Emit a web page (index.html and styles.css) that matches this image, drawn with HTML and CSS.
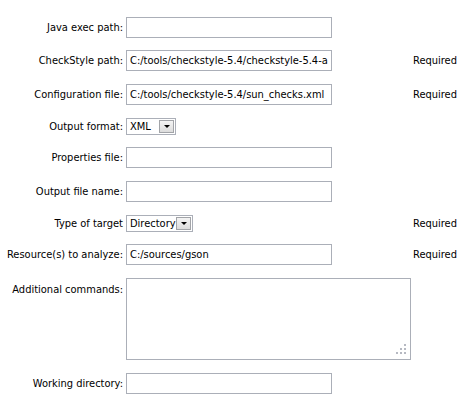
FILE: index.html
```html
<!DOCTYPE html>
<html>
<head>
<meta charset="utf-8">
<link rel="stylesheet" href="styles.css">
</head>
<body>
<form class="form">
  <label class="lbl">Java exec path:</label>
  <div class="field"><input class="text" type="text" value=""></div>
  <span class="req"></span>

  <label class="lbl">CheckStyle path:</label>
  <div class="field"><input class="text" type="text" value="C:/tools/checkstyle-5.4/checkstyle-5.4-all.jar"></div>
  <span class="req">Required</span>

  <label class="lbl">Configuration file:</label>
  <div class="field"><input class="text" type="text" value="C:/tools/checkstyle-5.4/sun_checks.xml"></div>
  <span class="req">Required</span>

  <label class="lbl">Output format:</label>
  <div class="field"><div class="select sel-xml"><span class="sel-val">XML</span><span class="sel-btn"><span class="arrow"></span></span></div></div>
  <span class="req"></span>

  <label class="lbl">Properties file:</label>
  <div class="field"><input class="text" type="text" value=""></div>
  <span class="req"></span>

  <label class="lbl">Output file name:</label>
  <div class="field"><input class="text" type="text" value=""></div>
  <span class="req"></span>

  <label class="lbl">Type of target</label>
  <div class="field"><div class="select sel-dir"><span class="sel-val">Directory</span><span class="sel-btn"><span class="arrow"></span></span></div></div>
  <span class="req">Required</span>

  <label class="lbl">Resource(s) to analyze:</label>
  <div class="field"><input class="text" type="text" value="C:/sources/gson"></div>
  <span class="req">Required</span>

  <label class="lbl lbl-top">Additional commands:</label>
  <div class="field area-wrap">
    <textarea class="area"></textarea>
    <svg class="grip" width="10" height="10" viewBox="0 0 10 10">
      <rect x="8" y="0" width="2" height="2"/>
      <rect x="4" y="4" width="2" height="2"/>
      <rect x="8" y="4" width="2" height="2"/>
      <rect x="0" y="8" width="2" height="2"/>
      <rect x="4" y="8" width="2" height="2"/>
      <rect x="8" y="8" width="2" height="2"/>
    </svg>
  </div>
  <span class="req"></span>

  <label class="lbl">Working directory:</label>
  <div class="field"><input class="text" type="text" value=""></div>
  <span class="req"></span>
</form>
</body>
</html>
```
FILE: styles.css
```css
html, body {
  margin: 0;
  padding: 0;
  background: #ffffff;
}

body {
  font-family: "DejaVu Sans", "Liberation Sans", sans-serif;
  font-stretch: condensed;
  font-size: 11px;
  color: #000000;
}

.form {
  display: grid;
  grid-template-columns: 126px 286px auto;
  grid-template-rows: 21px 21px 21px 17px 21px 21px 17px 21px 82px 21px;
  row-gap: 12.7px;
  padding-top: 16.5px;
  align-items: center;
}

.lbl {
  text-align: right;
  padding-right: 3px;
  line-height: 15px;
  white-space: nowrap;
}

.lbl-top {
  align-self: start;
  line-height: 13px;
  padding-top: 5px;
}

.req {
  padding-left: 1px;
  line-height: 15px;
  white-space: nowrap;
}

.field {
  display: flex;
  align-items: center;
}

.text {
  box-sizing: border-box;
  width: 206px;
  height: 21px;
  margin: 0;
  padding: 0 3px;
  border: 1px solid #abafb8;
  background: #fff;
  font: inherit;
  font-stretch: condensed;
  color: #000;
  outline: none;
}

.select {
  box-sizing: border-box;
  height: 17px;
  border: 1px solid #abafb8;
  background: #fff;
  display: flex;
  align-items: center;
  justify-content: space-between;
  padding: 1px;
}

.sel-xml { width: 50px; }
.sel-dir { width: 67px; }

.sel-val {
  padding-left: 2px;
  line-height: 13px;
}

.sel-btn {
  box-sizing: border-box;
  width: 15px;
  height: 13px;
  border: 1px solid #a2a4a8;
  background: linear-gradient(#f4f4f4, #dcdcdc);
  display: flex;
  align-items: center;
  justify-content: center;
}

.arrow {
  width: 0;
  height: 0;
  border-left: 3px solid transparent;
  border-right: 3px solid transparent;
  border-top: 3px solid #000;
  margin-top: 1px;
}

.area-wrap {
  position: relative;
  align-self: stretch;
}

.area {
  box-sizing: border-box;
  width: 285px;
  height: 82px;
  margin: 0;
  border: 1px solid #abafb8;
  background: #fff;
  resize: none;
  outline: none;
  font: inherit;
}

.grip {
  position: absolute;
  left: 270px;
  top: 66px;
  fill: #b6b9c2;
}
```
